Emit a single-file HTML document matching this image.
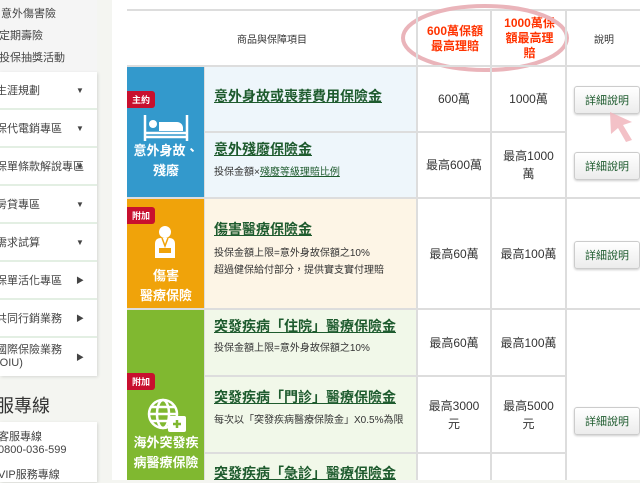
<!DOCTYPE html>
<html><head><meta charset="utf-8"><style>
*{margin:0;padding:0;box-sizing:border-box}
body{width:640px;height:480px;overflow:hidden;position:relative;background:#f4f5f1;font-family:"Liberation Sans","Noto Sans CJK TC",sans-serif;color:#333}
.a{position:absolute}
.sb{left:0;width:97px;background:#fff;box-shadow:1px 1px 3px rgba(0,0,0,.12)}
.it{position:absolute;left:-4px;width:101px;height:38px;border-bottom:2px solid #e3efe3;font-size:11px;color:#444;display:flex;align-items:center;white-space:nowrap}
.it i{position:absolute;left:80px;font-style:normal;font-size:8px}
.tx{font-size:11px;color:#444}
.main{left:112px;top:0;width:528px;height:480px;background:#fff}
.v{background:#ddd;width:2px}
.h{background:#ddd;height:2px}
.cat{color:#fff;font-weight:bold;font-size:13px;text-align:center;line-height:20px}
.tag{background:#c8102e;color:#fff;font-size:9px;font-weight:bold;padding:2px 5px;border-radius:0 3px 3px 0}
.lk{color:#1e5b2e;text-decoration:underline;font-weight:bold;font-size:14px}
.d{font-size:10px;color:#333;line-height:17px}
.n{font-size:12px;color:#333;text-align:center;line-height:18px;display:flex;align-items:center;justify-content:center}
.btn{width:66px;height:28px;border:1px solid #ccc;border-radius:3px;background:linear-gradient(#fff,#ececec);box-shadow:0 1px 2px rgba(0,0,0,.2);font-size:11px;color:#1e5b2e;display:flex;align-items:center;justify-content:center}
</style></head><body>
<div class="a" style="left:0;top:0;width:97px;height:72px;background:#f5f5f5"></div>
<div class="a tx" style="left:1px;top:5px">意外傷害險</div>
<div class="a tx" style="left:-1px;top:27px">定期壽險</div>
<div class="a tx" style="left:-1px;top:49px">投保抽獎活動</div>
<div class="a sb" style="top:72px;height:304px"></div>
<div class="it" style="top:72px">生涯規劃<i>▼</i></div>
<div class="it" style="top:110px">保代電銷專區<i>▼</i></div>
<div class="it" style="top:148px">保單條款解說專區<i>▼</i></div>
<div class="it" style="top:186px">房貸專區<i>▼</i></div>
<div class="it" style="top:224px">需求試算<i>▼</i></div>
<div class="it" style="top:262px">保單活化專區<i>▶</i></div>
<div class="it" style="top:300px">共同行銷業務<i>▶</i></div>
<div class="it" style="top:338px;line-height:13px;border:none">國際保險業務<br>(OIU)<i>▶</i></div>
<div class="a" style="left:-4px;top:392px;font-size:18px;color:#333">服專線</div>
<div class="a sb" style="top:422px;height:60px"></div>
<div class="a tx" style="left:-2px;top:431px;line-height:13px;font-size:11px">客服專線<br>0800-036-599</div>
<div class="a tx" style="left:-2px;top:466px">VIP服務專線</div>

<div class="a main"></div>
<div class="a h" style="left:127px;top:9px;width:513px"></div>
<div class="a" style="left:127px;top:31px;width:290px;text-align:center;font-size:10px">商品與保障項目</div>
<div class="a" style="left:419px;top:24px;width:72px;text-align:center;font-size:12px;font-weight:bold;color:#ff3300;line-height:15px">600萬保額<br>最高理賠</div>
<div class="a" style="left:493px;top:16px;width:73px;text-align:center;font-size:12px;font-weight:bold;color:#ff3300;line-height:15px">1000萬保<br>額最高理<br>賠</div>
<div class="a" style="left:568px;top:31px;width:72px;text-align:center;font-size:10px">說明</div>
<svg class="a" style="left:400px;top:2px" width="170" height="72"><ellipse cx="85" cy="36" rx="82" ry="32" fill="none" stroke="#eab4ba" stroke-width="4"/></svg>

<div class="a" style="left:127px;top:66px;width:78px;height:132px;background:#3399cc"></div>
<div class="a" style="left:205px;top:66px;width:212px;height:132px;background:#eef6fb"></div>
<div class="a" style="left:127px;top:198px;width:78px;height:111px;background:#f0a30a"></div>
<div class="a" style="left:205px;top:198px;width:212px;height:111px;background:#fdf5e6"></div>
<div class="a" style="left:127px;top:309px;width:78px;height:171px;background:#80b830"></div>
<div class="a" style="left:205px;top:309px;width:212px;height:171px;background:#f1f8e9"></div>

<div class="a h" style="left:127px;top:65px;width:513px"></div>
<div class="a h" style="left:205px;top:131px;width:361px"></div>
<div class="a h" style="left:127px;top:197px;width:513px"></div>
<div class="a h" style="left:127px;top:308px;width:513px"></div>
<div class="a h" style="left:205px;top:375px;width:361px"></div>
<div class="a h" style="left:205px;top:452px;width:361px"></div>
<div class="a v" style="left:416px;top:9px;height:471px"></div>
<div class="a v" style="left:490px;top:9px;height:471px"></div>
<div class="a v" style="left:565px;top:9px;height:471px"></div>
<div class="a v" style="left:204px;top:66px;height:414px;background:#ddd;width:1px"></div>

<div class="a tag" style="left:127px;top:91px">主約</div>
<svg class="a" style="left:143px;top:115px" width="46" height="26"><g fill="none" stroke="#fff" stroke-width="2.5"><path d="M2 0V26M44 0V26M2 18H44M2 22H44"/></g><circle cx="10" cy="9" r="4" fill="#fff"/><path d="M16 7h18a6 6 0 0 1 6 6v3H16z" fill="#fff"/></svg>
<div class="a cat" style="left:127px;top:141px;width:78px">意外身故、<br>殘廢</div>
<div class="a tag" style="left:127px;top:207px">附加</div>
<svg class="a" style="left:153px;top:226px" width="24" height="32"><circle cx="12" cy="6" r="6" fill="#fff"/><path d="M2 32V18q0-6 6-6h8q6 0 6 6v14z" fill="#fff"/><path d="M9 12l3 8 3-8" stroke="#f0a30a" stroke-width="1.5" fill="none"/><rect x="6" y="22" width="12" height="5" fill="#f0a30a"/></svg>
<div class="a cat" style="left:127px;top:266px;width:78px">傷害<br>醫療保險</div>
<div class="a tag" style="left:127px;top:373px">附加</div>
<svg class="a" style="left:146px;top:398px" width="42" height="36"><g fill="none" stroke="#fff" stroke-width="2.5"><circle cx="17" cy="16" r="14"/><ellipse cx="17" cy="16" rx="6" ry="14"/><path d="M3 16h28M5 9h24M5 23h24"/></g><rect x="22" y="18" width="18" height="16" rx="2" fill="#fff"/><path d="M31 22v8M27 26h8" stroke="#80b830" stroke-width="2.5"/></svg>
<div class="a cat" style="left:127px;top:433px;width:78px">海外突發疾<br>病醫療保險</div>

<div class="a lk" style="left:214px;top:86px">意外身故或喪葬費用保險金</div>
<div class="a lk" style="left:214px;top:139px">意外殘廢保險金</div>
<div class="a d" style="left:214px;top:164px">投保金額×<span style="color:#1e5b2e;text-decoration:underline">殘廢等級理賠比例</span></div>
<div class="a lk" style="left:214px;top:219px">傷害醫療保險金</div>
<div class="a d" style="left:214px;top:245px">投保金額上限=意外身故保額之10%<br>超過健保給付部分，提供實支實付理賠</div>
<div class="a lk" style="left:214px;top:316px">突發疾病「住院」醫療保險金</div>
<div class="a d" style="left:214px;top:340px">投保金額上限=意外身故保額之10%</div>
<div class="a lk" style="left:214px;top:387px">突發疾病「門診」醫療保險金</div>
<div class="a d" style="left:214px;top:412px">每次以「突發疾病醫療保險金」X0.5%為限</div>
<div class="a lk" style="left:214px;top:463px">突發疾病「急診」醫療保險金</div>

<div class="a n" style="left:418px;top:66px;width:72px;height:66px">600萬</div>
<div class="a n" style="left:492px;top:66px;width:73px;height:66px">1000萬</div>
<div class="a n" style="left:418px;top:132px;width:72px;height:66px">最高600萬</div>
<div class="a n" style="left:492px;top:132px;width:73px;height:66px">最高1000<br>萬</div>
<div class="a n" style="left:418px;top:198px;width:72px;height:111px">最高60萬</div>
<div class="a n" style="left:492px;top:198px;width:73px;height:111px">最高100萬</div>
<div class="a n" style="left:418px;top:309px;width:72px;height:67px">最高60萬</div>
<div class="a n" style="left:492px;top:309px;width:73px;height:67px">最高100萬</div>
<div class="a n" style="left:418px;top:376px;width:72px;height:77px">最高3000<br>元</div>
<div class="a n" style="left:492px;top:376px;width:73px;height:77px">最高5000<br>元</div>

<div class="a btn" style="left:574px;top:86px">詳細說明</div>
<div class="a btn" style="left:574px;top:152px">詳細說明</div>
<div class="a btn" style="left:574px;top:241px">詳細說明</div>
<div class="a btn" style="left:574px;top:407px">詳細說明</div>
<svg class="a" style="left:606px;top:108px" width="34" height="34"><path d="M4 4L26 14 17 17 26 32 20 34 12 20 5 26z" fill="#f1b6bd" opacity=".85"/></svg>
</body></html>
